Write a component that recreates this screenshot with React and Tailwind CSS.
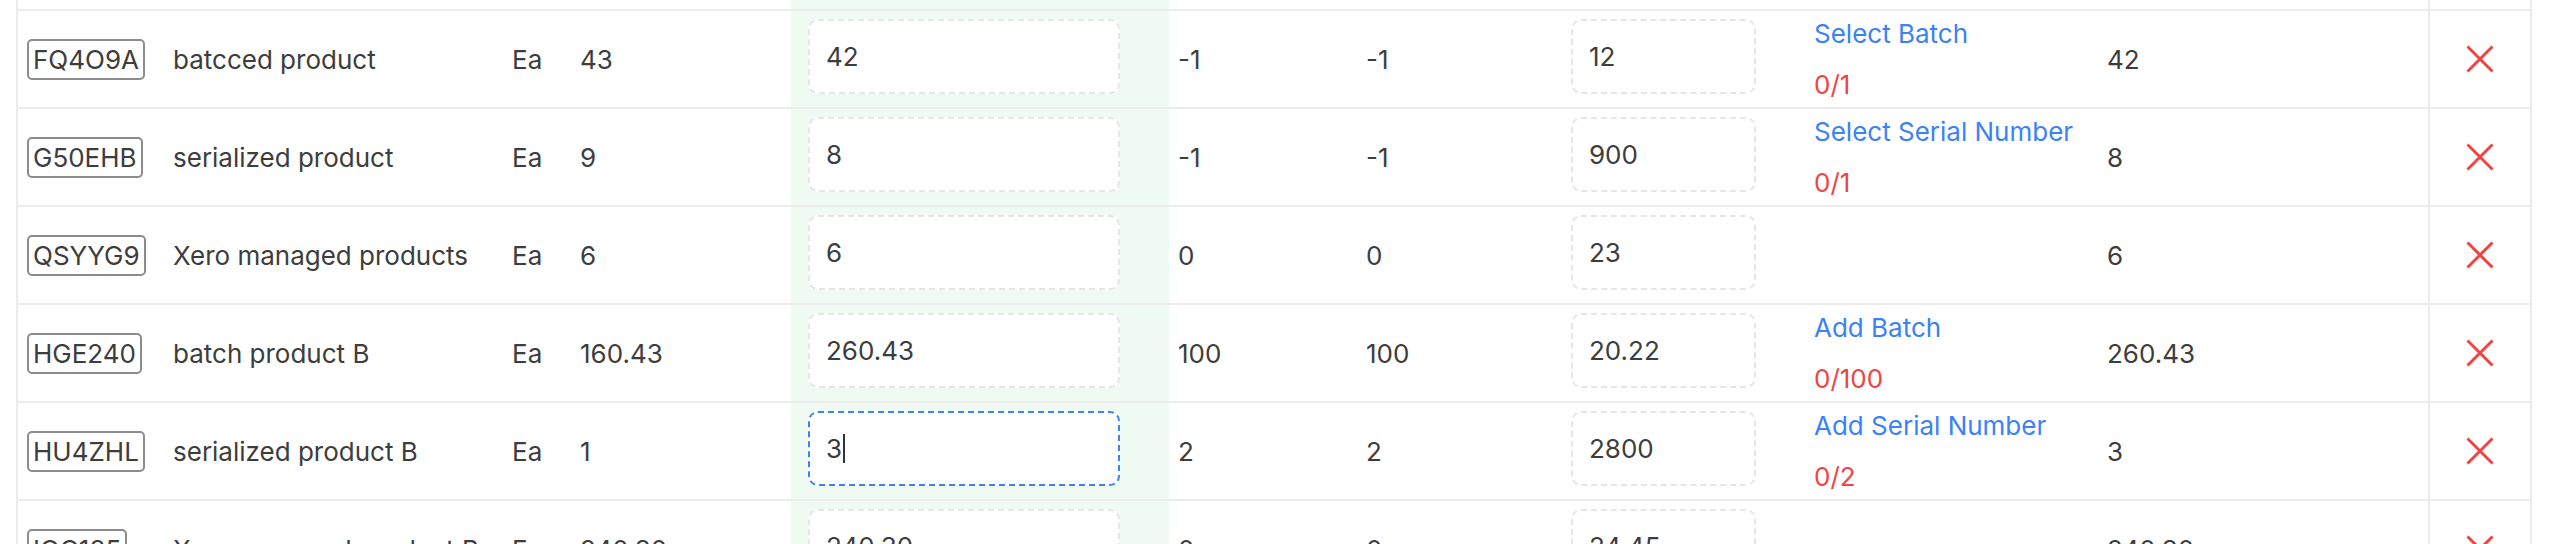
import React from 'react';

const ROWS = [
  { code: 'FQ4O9A', name: 'batcced product', qty: '43', pick: '42', a: '-1', b: '-1', cost: '12', link: 'Select Batch', count: '0/1', total: '42' },
  { code: 'G50EHB', name: 'serialized product', qty: '9', pick: '8', a: '-1', b: '-1', cost: '900', link: 'Select Serial Number', count: '0/1', total: '8' },
  { code: 'QSYYG9', name: 'Xero managed products', qty: '6', pick: '6', a: '0', b: '0', cost: '23', total: '6' },
  { code: 'HGE240', name: 'batch product B', qty: '160.43', pick: '260.43', a: '100', b: '100', cost: '20.22', link: 'Add Batch', count: '0/100', total: '260.43' },
  { code: 'HU4ZHL', name: 'serialized product B', qty: '1', pick: '3', focused: true, a: '2', b: '2', cost: '2800', link: 'Add Serial Number', count: '0/2', total: '3' },
  { code: 'IQC185', name: 'Xero managed product B', qty: '240.30', pick: '240.30', a: '0', b: '0', cost: '24.45', total: '240.30' },
];

const GRID = 'grid grid-cols-[145px_339px_68px_221px_378px_187px_205px_243px_293px_331px_102px]';

function CloseIcon() {
  return (
    <svg width="28" height="28" viewBox="0 0 28 28" fill="none">
      <path d="M1.5 1.5L26.5 26.5M26.5 1.5L1.5 26.5" stroke="#ef4444" strokeWidth="3" />
    </svg>
  );
}

function Field({ value, width, focused }) {
  return (
    <div
      className={`${width} h-[75px] mb-[5px] rounded-[10px] border-2 border-dashed bg-white flex items-center px-[16px] ${
        focused ? 'border-[#3b82f6]' : 'border-[#e6e6e6]'
      }`}
    >
      <span>{value}</span>
      {focused && <span className="ml-[1px] w-[2px] h-[29px] bg-[#333]" />}
    </div>
  );
}

function Row({ r }) {
  return (
    <div className={`${GRID} border-t-2 border-[#ececec] h-[98px]`}>
      <div className="flex items-center pl-[9px]">
        <span className="border-2 border-[#8c8c8c] rounded-[5px] px-[4px] h-[41px] flex items-center">{r.code}</span>
      </div>
      <div className="flex items-center pl-[10px] whitespace-nowrap">{r.name}</div>
      <div className="flex items-center pl-[10px]">Ea</div>
      <div className="flex items-center pl-[10px]">{r.qty}</div>
      <div className="flex items-center pl-[17px] bg-[#effbf2]">
        <Field value={r.pick} width="w-[312px]" focused={r.focused} />
      </div>
      <div className="flex items-center pl-[9px]">{r.a}</div>
      <div className="flex items-center pl-[10px]">{r.b}</div>
      <div className="flex items-center pl-[10px]">
        <Field value={r.cost} width="w-[185px]" />
      </div>
      <div className="flex flex-col justify-center pl-[10px] gap-[15px] whitespace-nowrap">
        {r.link && (
          <>
            <span className="leading-[36px] text-[#3b82f6]">{r.link}</span>
            <span className="leading-[36px] text-[#ef4444]">{r.count}</span>
          </>
        )}
      </div>
      <div className="flex items-center pl-[10px]">{r.total}</div>
      <div className="flex items-center justify-center border-l-2 border-[#ececec]">
        <CloseIcon />
      </div>
    </div>
  );
}

export default function App() {
  return (
    <div className="h-[544px] w-[2564px] overflow-hidden bg-white pl-[16px]" style={{ fontFamily: 'Inter, "Noto Sans", sans-serif' }}>
      <div className="w-[2516px] border-x-2 border-[#ececec] text-[26px] text-[#3d3d3d]">
        <div className={`${GRID} h-[9px]`}>
          <div />
          <div />
          <div />
          <div />
          <div className="bg-[#effbf2]" />
          <div />
          <div />
          <div />
          <div />
          <div />
          <div className="border-l-2 border-[#ececec]" />
        </div>
        {ROWS.map((r) => (
          <Row key={r.code} r={r} />
        ))}
      </div>
    </div>
  );
}
